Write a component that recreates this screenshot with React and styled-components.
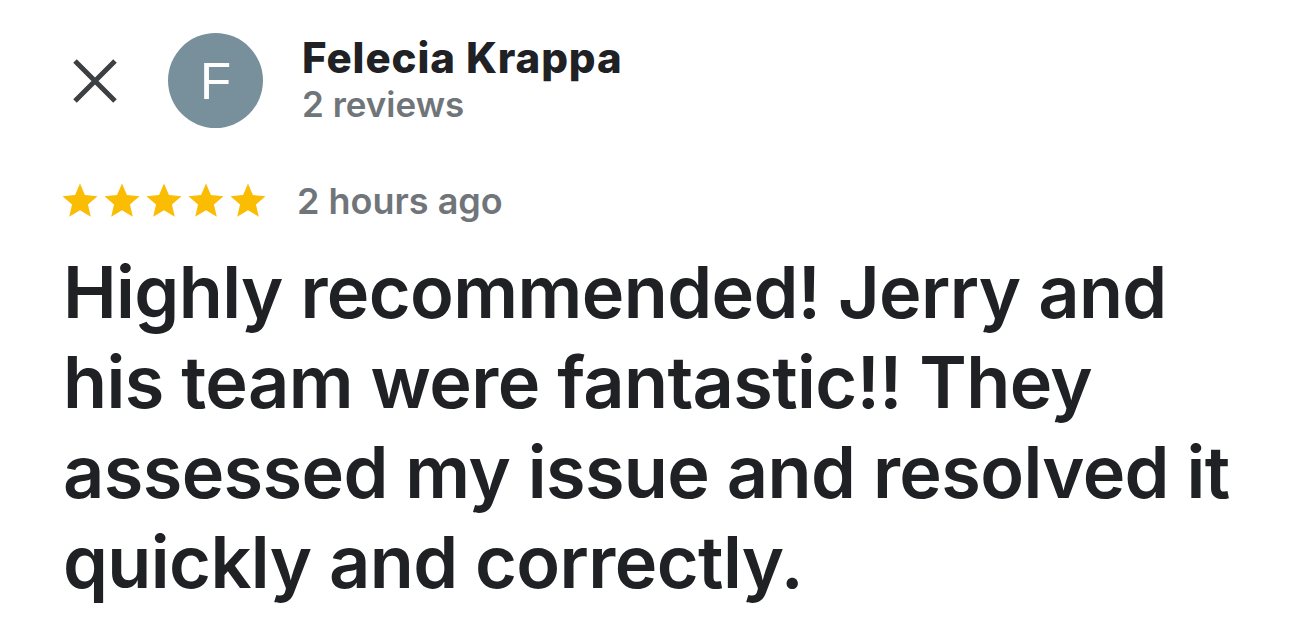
import React from "react";
import styled, { createGlobalStyle } from "styled-components";

const Global = createGlobalStyle`
  html, body { margin: 0; padding: 0; background: #ffffff; }
  body { font-family: Inter, "Noto Sans", sans-serif; -webkit-font-smoothing: antialiased; }
`;

const Page = styled.div`
  width: 1290px;
  height: 643px;
  overflow: hidden;
  background: #ffffff;
  display: flex;
  flex-direction: column;
`;

const Header = styled.header`
  display: flex;
  align-items: flex-start;
  padding: 33px 0 0 73px;
`;

const CloseButton = styled.button`
  width: 44px;
  height: 44px;
  margin-top: 26px;
  padding: 0;
  border: 0;
  background: transparent;
  color: #3c4043;
  display: flex;
  cursor: pointer;
`;

const Avatar = styled.div`
  width: 95px;
  height: 95px;
  margin-left: 51px;
  border-radius: 50%;
  background: #78909c;
  color: #ffffff;
  display: flex;
  align-items: center;
  justify-content: center;
  font-family: "Liberation Sans", Arial, sans-serif;
  font-weight: 400;
  font-size: 51px;
  line-height: 1;
  padding-top: 2px;
  box-sizing: border-box;
`;

const Author = styled.div`
  display: flex;
  flex-direction: column;
  margin-left: 39px;
`;

const Name = styled.div`
  font-family: Inter, sans-serif;
  font-weight: 800;
  font-size: 42px;
  line-height: 49px;
  color: #202124;
  letter-spacing: 0.9px;
`;

const Meta = styled.div`
  font-family: Inter, sans-serif;
  font-weight: 600;
  font-size: ${(p) => p.$size || 35}px;
  line-height: 44px;
  color: #70757a;
  white-space: nowrap;
`;

const RatingRow = styled.div`
  display: flex;
  align-items: center;
  margin: 52px 0 0 59px;
  height: 42px;
`;

const Stars = styled.div`
  display: flex;
  color: #fbbc04;
  margin-right: 28px;
`;

const Review = styled.p`
  margin: 25px 40px 0 63px;
  font-family: Inter, sans-serif;
  font-weight: 600;
  font-size: 72px;
  line-height: 90px;
  letter-spacing: -0.6px;
  color: #202124;
  font-variant-ligatures: none;
`;

const Star = () => (
  <svg width="42" height="42" viewBox="0 0 24 24" fill="currentColor">
    <path d="M12 17.27L18.18 21l-1.64-7.03L22 9.24l-7.19-.61L12 2 9.19 8.63 2 9.24l5.46 4.73L5.82 21z" />
  </svg>
);

export default function App() {
  return (
    <Page>
      <Global />
      <Header>
        <CloseButton aria-label="Close">
          <svg width="44" height="44" viewBox="0 0 44 44">
            <path d="M2 2L42 42M42 2L2 42" stroke="currentColor" strokeWidth="5" fill="none" />
          </svg>
        </CloseButton>
        <Avatar>F</Avatar>
        <Author>
          <Name>Felecia Krappa</Name>
          <Meta>2 reviews</Meta>
        </Author>
      </Header>
      <RatingRow>
        <Stars>
          {[0, 1, 2, 3, 4].map((i) => (
            <Star key={i} />
          ))}
        </Stars>
        <Meta $size={36}>2 hours ago</Meta>
      </RatingRow>
      <Review>
        Highly recommended! Jerry and his team were fantastic!! They assessed my issue and resolved it quickly and correctly.
      </Review>
    </Page>
  );
}
